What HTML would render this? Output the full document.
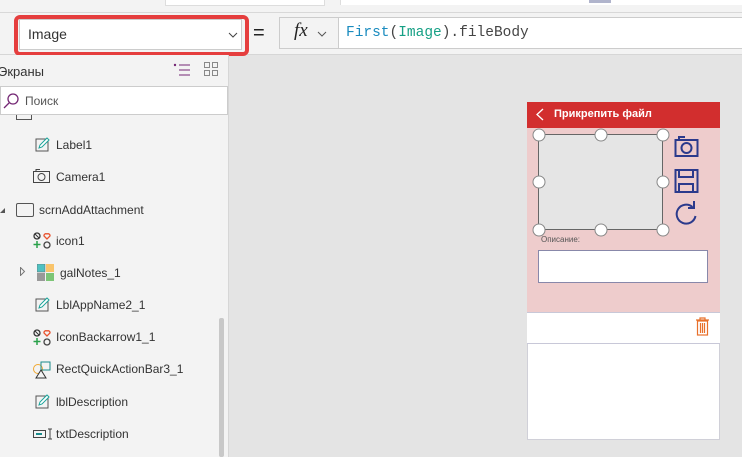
<!DOCTYPE html>
<html><head><meta charset="utf-8"><style>
body{margin:0;width:742px;height:457px;overflow:hidden;background:#e4e4e4;font-family:"Liberation Sans","Noto Sans CJK SC",sans-serif;position:relative}
.a{position:absolute}
.t{font-size:12px;color:#333}
</style></head><body>
<div class="a" style="left:0;top:0;width:742px;height:12px;background:#f3f3f3;border-bottom:1px solid #d8d8d8"></div>
<div class="a" style="left:165px;top:0;width:158px;height:5px;background:#fff;border:1px solid #ddd;border-top:0"></div>
<div class="a" style="left:340px;top:0;width:402px;height:5px;background:#fff;border-left:1px solid #ddd"></div>
<div class="a" style="left:589px;top:0;width:22px;height:3px;background:#b0b4cc"></div>
<div class="a" style="left:0;top:13px;width:742px;height:41px;background:#f3f3f3;border-bottom:1px solid #d6d6d6"></div>
<div class="a" style="left:14px;top:15px;width:235px;height:41px;border:4px solid #e53e3e;border-radius:6px;box-sizing:border-box"></div>
<div class="a" style="left:19px;top:19px;width:223px;height:31px;background:#fff;border:1px solid #ccc;box-sizing:border-box"></div>
<div class="a" style="left:28px;top:26px;font-size:14px;color:#333">Image</div>
<svg class="a" style="left:228px;top:32px" width="10" height="6"><path d="M1 1l4 4 4-4" stroke="#444" fill="none"/></svg>
<div class="a" style="left:253px;top:22px;font-size:20px;color:#222">=</div>
<div class="a" style="left:279px;top:17px;width:60px;height:32px;background:#f3f3f3;border:1px solid #ccc;box-sizing:border-box"></div>
<div class="a" style="left:294px;top:20px;font:italic 19px 'Liberation Serif',serif;color:#222">fx</div>
<svg class="a" style="left:317px;top:31px" width="10" height="6"><path d="M1 1l4 4 4-4" stroke="#555" fill="none"/></svg>
<div class="a" style="left:339px;top:17px;width:403px;height:32px;background:#fff;border-top:1px solid #ccc;border-bottom:1px solid #ccc;box-sizing:border-box"></div>
<div class="a" style="left:346px;top:25px;font:14.5px 'Liberation Mono',monospace;color:#444"><span style="color:#1a8bbf">First</span>(<span style="color:#16a085">Image</span>).fileBody</div>
<div class="a" style="left:0;top:55px;width:228px;height:402px;background:#f3f3f3;border-right:1px solid #d6d6d6"></div>
<div class="a t" style="left:-2px;top:64px;font-size:13px">Экраны</div>
<svg class="a" style="left:173px;top:63px" width="18" height="14"><circle cx="2" cy="2" r="1.2" fill="#742774"/><path d="M6 2h11M6 7h11M6 12h11" stroke="#742774"/></svg>
<svg class="a" style="left:204px;top:62px" width="14" height="14"><rect x=".5" y=".5" width="5" height="5" fill="none" stroke="#888"/><rect x="8.5" y=".5" width="5" height="5" fill="none" stroke="#888"/><rect x=".5" y="8.5" width="5" height="5" fill="none" stroke="#888"/><rect x="8.5" y="8.5" width="5" height="5" fill="none" stroke="#888"/></svg>
<div class="a" style="left:0;top:86px;width:228px;height:29px;background:#fff;border:1px solid #ccc;box-sizing:border-box"></div>
<svg class="a" style="left:3px;top:93px" width="16" height="16"><circle cx="10" cy="6" r="5" fill="none" stroke="#742774" stroke-width="1.3"/><path d="M6 10l-5 5" stroke="#742774" stroke-width="1.3"/></svg>
<div class="a t" style="left:25px;top:94px;color:#555">Поиск</div>
<div class="a" style="left:16px;top:115px;width:14px;height:4px;border:1px solid #555;border-top:0"></div>
<svg class="a" style="left:35px;top:137px" width="15" height="15"><rect x="1" y="2" width="12" height="12" fill="none" stroke="#555"/><path d="M4 11l1-3 7-7 2 2-7 7z" fill="#fff" stroke="#1aa39a"/></svg>
<div class="a t" style="left:56px;top:138px">Label1</div>
<svg class="a" style="left:33px;top:169px" width="17" height="14"><rect x=".5" y="2.5" width="16" height="11" fill="none" stroke="#444"/><circle cx="8.5" cy="8" r="3.5" fill="none" stroke="#444"/><path d="M3 2V.5h4" stroke="#444" fill="none"/></svg>
<div class="a t" style="left:56px;top:170px">Camera1</div>
<svg class="a" style="left:0;top:205px" width="6" height="8"><path d="M0 8h5V3z" fill="#555"/></svg>
<div class="a" style="left:16px;top:203px;width:16px;height:12px;border:1px solid #555;border-radius:2px"></div>
<div class="a t" style="left:39px;top:203px">scrnAddAttachment</div>
<svg class="a" style="left:33px;top:232px" width="20" height="18"><circle cx="4" cy="4" r="3" fill="none" stroke="#333" stroke-width="1.3"/><path d="M2 2l4 4" stroke="#333"/><path d="M14 7l-3-3a2 2 0 0 1 3-2 2 2 0 0 1 3 2z" fill="none" stroke="#e8532f" stroke-width="1.3"/><path d="M4 9v7M0.5 12.5h7" stroke="#2aa14b" stroke-width="1.5"/><circle cx="14" cy="13" r="3" fill="none" stroke="#444" stroke-width="1.3"/></svg>
<div class="a t" style="left:56px;top:234px">icon1</div>
<svg class="a" style="left:20px;top:267px" width="6" height="9"><path d="M.5.5l4 4-4 4z" fill="none" stroke="#777"/></svg>
<svg class="a" style="left:37px;top:264px" width="18" height="18"><rect x="0" y="0" width="8" height="8" fill="#4fc1c1" stroke="#666" stroke-width=".5"/><rect x="9" y="0" width="8" height="8" fill="#f9c46b"/><rect x="0" y="9" width="8" height="8" fill="#999"/><rect x="9" y="9" width="8" height="8" fill="#7cc576"/></svg>
<div class="a t" style="left:60px;top:266px">galNotes_1</div>
<svg class="a" style="left:35px;top:297px" width="15" height="15"><rect x="1" y="2" width="12" height="12" fill="none" stroke="#555"/><path d="M4 11l1-3 7-7 2 2-7 7z" fill="#fff" stroke="#1aa39a"/></svg>
<div class="a t" style="left:56px;top:298px">LblAppName2_1</div>
<svg class="a" style="left:33px;top:329px" width="20" height="18"><circle cx="4" cy="4" r="3" fill="none" stroke="#333" stroke-width="1.3"/><path d="M2 2l4 4" stroke="#333"/><path d="M14 7l-3-3a2 2 0 0 1 3-2 2 2 0 0 1 3 2z" fill="none" stroke="#e8532f" stroke-width="1.3"/><path d="M4 9v7M0.5 12.5h7" stroke="#2aa14b" stroke-width="1.5"/><circle cx="14" cy="13" r="3" fill="none" stroke="#444" stroke-width="1.3"/></svg>
<div class="a t" style="left:56px;top:330px">IconBackarrow1_1</div>
<svg class="a" style="left:33px;top:361px" width="20" height="18"><circle cx="5" cy="8" r="4.5" fill="none" stroke="#f0a830"/><rect x="8" y="1" width="9" height="8" fill="none" stroke="#1a8b8b"/><path d="M3 17l5-8 5 8z" fill="#f3f3f3" stroke="#333"/></svg>
<div class="a t" style="left:56px;top:362px">RectQuickActionBar3_1</div>
<svg class="a" style="left:35px;top:394px" width="15" height="15"><rect x="1" y="2" width="12" height="12" fill="none" stroke="#555"/><path d="M4 11l1-3 7-7 2 2-7 7z" fill="#fff" stroke="#1aa39a"/></svg>
<div class="a t" style="left:56px;top:395px">lblDescription</div>
<svg class="a" style="left:33px;top:428px" width="20" height="12"><rect x=".5" y="2.5" width="12" height="7" fill="none" stroke="#444"/><rect x="3" y="5" width="6" height="2" fill="#1a8b8b"/><path d="M15 1h4M17 1v10M15 11h4" stroke="#444" fill="none"/></svg>
<div class="a t" style="left:56px;top:427px">txtDescription</div>
<div class="a" style="left:219px;top:318px;width:5px;height:139px;background:#c8c8c8;border-radius:2px"></div>
<div class="a" style="left:527px;top:102px;width:193px;height:338px;background:#fff;border:1px solid #d0d0d8;box-sizing:border-box"></div>
<div class="a" style="left:527px;top:102px;width:193px;height:26px;background:#d22e2e"></div>
<svg class="a" style="left:536px;top:108px" width="8" height="13"><path d="M7 1L1 6.5 7 12" stroke="#fff" fill="none" stroke-width="1.3"/></svg>
<div class="a" style="left:554px;top:108px;font-size:11px;font-weight:bold;color:#fff">Прикрепить файл</div>
<div class="a" style="left:527px;top:128px;width:193px;height:184px;background:#eecccc"></div>
<div class="a" style="left:538px;top:134px;width:125px;height:96px;background:#e5e5e5;border:1px solid #666;box-sizing:border-box"></div>
<svg class="a" style="left:530px;top:126px" width="142" height="112">
<g fill="#fff" stroke="#888"><circle cx="9" cy="9" r="6"/><circle cx="71" cy="9" r="6"/><circle cx="133" cy="9" r="6"/><circle cx="9" cy="56" r="6"/><circle cx="133" cy="56" r="6"/><circle cx="9" cy="104" r="6"/><circle cx="71" cy="104" r="6"/><circle cx="133" cy="104" r="6"/></g></svg>
<svg class="a" style="left:674px;top:136px" width="26" height="96" fill="none" stroke="#2b3a8c" stroke-width="2">
<rect x="1.5" y="4" width="22" height="16"/><circle cx="12.5" cy="12" r="5"/><path d="M5 4V1h6"/>
<rect x="1.5" y="34" width="22" height="22"/><path d="M5 34v7h14v-7M5 56v-8h14v8"/>
<path d="M21.5 80a9.5 9.5 0 1 1-3-9"/><path d="M20 65v7h-6"/>
</svg>
<div class="a" style="left:541px;top:235px;font-size:8px;color:#555">Описание:</div>
<div class="a" style="left:538px;top:250px;width:170px;height:33px;background:#fff;border:1px solid #8888aa;box-sizing:border-box"></div>
<div class="a" style="left:527px;top:312px;width:193px;height:32px;background:#fff;border-top:1px solid #c8c8d8;border-bottom:1px solid #c8c8d8;box-sizing:border-box"></div>
<svg class="a" style="left:695px;top:317px" width="15" height="19" fill="none" stroke="#e8702a" stroke-width="1.2"><path d="M1 3h13M5 3V1h5v2"/><rect x="2.5" y="4" width="10" height="14"/><path d="M5.5 6v10M7.5 6v10M9.5 6v10"/></svg>
</body></html>
